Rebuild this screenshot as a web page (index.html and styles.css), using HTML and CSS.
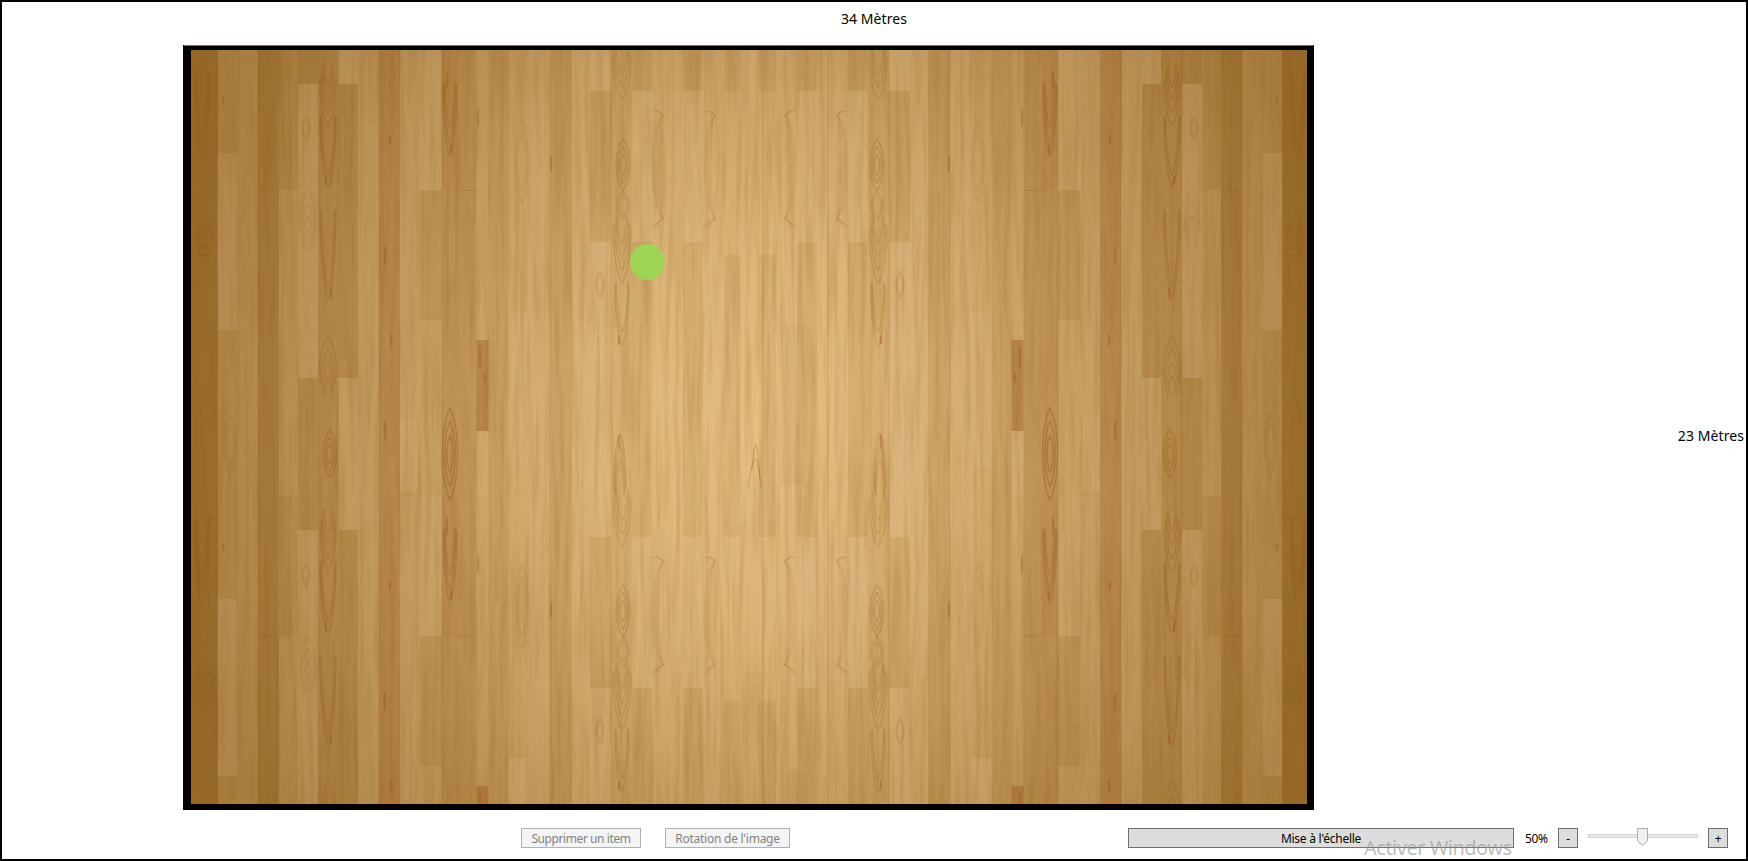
FILE: index.html
```html
<!DOCTYPE html>
<html lang="fr">
<head>
<meta charset="utf-8">
<title>Plan de salle</title>
<link rel="stylesheet" href="styles.css">
</head>
<body>
<div class="window">
  <header class="dimension dimension-width"><span class="measure">34 Mètres</span></header>
  <main class="workspace">
    <div class="room">
      <svg class="floor" viewBox="191 50 1116 754" preserveAspectRatio="none">
        <defs>
          <radialGradient id="light" gradientUnits="userSpaceOnUse" cx="0" cy="0" r="1" gradientTransform="translate(755 430) scale(585 690)">
            <stop offset="0" stop-color="#e5bf85"/>
            <stop offset=".28" stop-color="#dab478"/>
            <stop offset=".55" stop-color="#c69e60"/>
            <stop offset=".8" stop-color="#b48a4c"/>
            <stop offset="1" stop-color="#a47a39"/>
          </radialGradient>
          <filter id="grain" x="0" y="0" width="100%" height="100%" color-interpolation-filters="sRGB">
            <feTurbulence type="fractalNoise" baseFrequency=".2 .009" numOctaves="3" seed="8"/>
            <feColorMatrix values="0 0 0 0 .55  0 0 0 0 .33  0 0 0 0 .06  1.6 0 0 0 -.64"/>
          </filter>
          <g id="half"></g>
          <g id="boards">
            <use href="#half"/>
            <use href="#half" transform="translate(1500 0) scale(-1 1)"/>
            <g id="middle"></g>
          </g>
        </defs>
        <rect x="191" y="50" width="1116" height="754" fill="url(#light)"/>
        <use href="#boards"/>
        <use href="#boards" y="446"/>
        <rect x="191" y="50" width="1116" height="754" filter="url(#grain)" opacity=".26"/>
      </svg>
      <span class="item"></span>
    </div>
    <span class="measure dimension-height">23 Mètres</span>
  </main>
  <footer class="toolbar">
    <button class="button delete" disabled>Supprimer un item</button>
    <button class="button rotate" disabled>Rotation de l'image</button>
    <button class="button scale">Mise à l'échelle</button>
    <span class="zoom-value">50%</span>
    <button class="button step">-</button>
    <svg class="slider" width="110" height="20" viewBox="0 0 110 20">
      <rect x=".5" y="6.5" width="109" height="3" fill="#e7eaea" stroke="#d6d6d6"/>
      <path d="M49.500.5h10v12.500l-5 4.500-5-4.500z" fill="#f0f0f0" stroke="#acacac"/>
    </svg>
    <button class="button step">+</button>
  </footer>
  <div class="watermark">Activer Windows</div>
</div>
<script src="floor.js"></script>
</body>
</html>
```

FILE: styles.css
```css
* { box-sizing: border-box; }
body { margin: 0; background: #fff; font-family: "Noto Sans", "Open Sans", sans-serif; color: #000; }
.window { position: relative; display: flex; flex-direction: column; width: 1748px; height: 861px; border: 2px solid #000; overflow: hidden; }
.dimension { flex: 0 0 43px; display: flex; justify-content: center; padding-top: 7px; }
.measure { font-size: 14px; line-height: 20px; letter-spacing: .08px; white-space: nowrap; }
.workspace { display: flex; justify-content: space-between; height: 765px; padding-left: 181px; }
.room { position: relative; width: 1131px; height: 765px; border-style: solid; border-color: #000; border-width: 5px 7px 6px 8px; }
.room::before { content: ""; position: absolute; top: -5px; left: -7px; right: -6px; height: 1px; background: #8e7046; }
.floor { display: block; width: 1116px; height: 754px; }
.figure { filter: blur(.5px); }
.item { position: absolute; left: 439px; top: 194px; width: 35px; height: 36px; border-radius: 50%; background: #9fd356; }
.dimension-height { align-self: center; margin-right: 2px; margin-top: 17px; }
.toolbar { display: flex; align-items: flex-start; padding: 18px 18px 0 519px; height: 49px; }
.button { height: 20px; padding: 1px 0 0; border: 1px solid #707070; background: #ddd; font: 12px/17px "Noto Sans", "Open Sans", sans-serif; letter-spacing: -.25px; color: #000; white-space: nowrap; }
.button:disabled { background: #f4f4f4; border-color: #adb2b5; color: #838383; }
.delete { width: 120px; margin-right: 24px; letter-spacing: -.42px; }
.rotate { width: 125px; }
.scale { width: 386px; margin-left: 338px; }
.zoom-value { width: 44px; padding-left: 11px; font-size: 12px; line-height: 21px; letter-spacing: -.4px; }
.step { width: 20px; }
.slider { display: block; margin: 0 10px; }
.watermark { position: absolute; left: 1362px; top: 832px; font-size: 20px; line-height: 27px; letter-spacing: -.5px; white-space: nowrap; color: rgba(150, 150, 150, .65); }
```

FILE: floor.js
```js
const NS = "http://www.w3.org/2000/svg";
const DARK = "#7d4a08", RED = "#8f4810", PALE = "#d6b48c";
const half = document.getElementById("half");
const middle = document.getElementById("middle");

function add(parent, name, attrs) {
  const el = document.createElementNS(NS, name);
  for (const key in attrs) el.setAttribute(key, attrs[key]);
  parent.appendChild(el);
  return el;
}

// Boards: left, right, top, bottom, colour, opacity
const boards = [
  [191, 217.5, 50, 496, DARK, .34],
  [217.500, 237, 50, 153, PALE, .06], [217.500, 237, 153, 330, PALE, .24], [217.500, 237, 330, 496, PALE, .06],
  [237, 258, 50, 496, PALE, .1],
  [258, 279, 50, 496, DARK, .24], [279, 292, 50, 190, DARK, .06],
  [279, 298, 190, 496, PALE, .1],
  [298, 318.5, 50, 84, DARK, .1], [298, 318.5, 84, 378, PALE, .22], [298, 318.5, 378, 496, DARK, .1],
  [318.500, 339, 50, 496, DARK, .1],
  [339, 358, 50, 84, PALE, .22], [339, 358, 84, 378, DARK, .12], [339, 358, 378, 496, PALE, .22],
  [358, 379, 50, 496, PALE, .16],
  [379, 400, 50, 496, RED, .2],
  [400, 420, 50, 418, PALE, .14], [400, 417, 418, 491, PALE, .28],
  [420, 442, 50, 190, PALE, .2], [420, 442, 190, 320, DARK, .09], [420, 442, 320, 496, PALE, .06],
  [442, 458, 50, 190, RED, .2], [442, 458, 190, 330, DARK, .14], [442, 458, 330, 496, RED, .17],
  [458, 476.5, 50, 496, DARK, .15],
  [476.500, 488.5, 340, 431, RED, .34], [476.500, 488.5, 431, 496, PALE, .22],
  [488.500, 508.5, 50, 496, DARK, .09],
  [508.500, 529, 312, 468, PALE, .3],
  [529, 550, 50, 496, PALE, .14],
  [550, 572, 50, 496, DARK, .12],
  [572, 590, 50, 496, PALE, .12],
  [590, 611, 50, 91, PALE, .24], [590, 611, 91, 242, DARK, .09], [590, 611, 242, 496, PALE, .24],
  [611, 632.5, 50, 496, DARK, .06],
  [632.500, 652, 50, 91, DARK, .09], [632.500, 652, 91, 242, PALE, .26], [632.500, 652, 242, 496, DARK, .09],
  [652, 683, 91, 242, PALE, .14],
  [683, 702.5, 50, 91, DARK, .09], [683, 702.5, 91, 242, PALE, .2], [683, 702.5, 242, 496, DARK, .09],
  [702.500, 724, 50, 496, PALE, .1],
  [724, 741, 50, 91, DARK, .08], [724, 741, 255, 496, DARK, .08]
];
for (const [l, r, t, b, color, alpha] of boards) {
  add(half, "rect", { x: l, y: t, width: r - l, height: b - t, fill: color, "fill-opacity": alpha });
}

// Fine seams along the board edges
for (const x of [217.5, 258, 318.5, 379, 442, 550, 611]) {
  add(half, "path", { d: `M${x} 50V496`, stroke: DARK, "stroke-opacity": .16 });
}
for (const [l, r, y] of [[197, 217, 255.5], [197, 217, 337.5], [258, 279, 190.5], [458, 476, 190.5]]) {
  add(half, "path", { d: `M${l} ${y}H${r}`, stroke: DARK, "stroke-opacity": .2 });
}

const figure = add(half, "g", { class: "figure" });
function line(d, alpha, width) {
  add(figure, "path", { d, fill: "none", stroke: "#8b5010", "stroke-opacity": alpha, "stroke-width": width });
}
// Pointed growth rings: centre, tip, half width, height, direction
function arches(x, y, w, h, dir, count, alpha) {
  for (let i = 0; i < count; i++) {
    const s = 1 - i * .16, tip = y - dir * i * 13;
    line(`M${x - w * s} ${tip - dir * h * s}C${x - w * s} ${tip - dir * h * .4} ${x - 2} ${tip} ${x} ${tip}S${x + w * s} ${tip - dir * h * .4} ${x + w * s} ${tip - dir * h * s}`, alpha, 1.4);
  }
}
// Closed growth rings round a knot
function rings(x, y, w, h, count, alpha) {
  for (let i = 0; i < count; i++) {
    const s = 1 - i * .3, a = w * s, b = h * s;
    line(`M${x} ${y - b}C${x + a} ${y - b * .55} ${x + a} ${y + b * .5} ${x} ${y + b}C${x - a} ${y + b * .5} ${x - a} ${y - b * .55} ${x} ${y - b}Z`, alpha, 1.4);
  }
}
arches(328, 125, 8, 45, 1, 4, .24);
arches(328, 187, 8, 70, 1, 2, .3);
arches(328, 299, 8, 90, 1, 2, .26);
arches(328, 337, 9, 40, -1, 4, .22);
rings(330, 454, 9, 24, 3, .28);
arches(450, 155, 7, 70, 1, 3, .28);
rings(450, 454, 10, 46, 3, .36);
arches(622, 100, 9, 45, 1, 3, .16);
rings(623, 165, 9, 26, 3, .24);
rings(623, 206, 8, 14, 2, .16);
arches(622, 283, 9, 55, 1, 4, .2);
arches(622, 345, 7, 60, 1, 2, .22);
arches(620, 434, 6, 55, -1, 3, .22);
rings(522, 161, 8, 42, 2, .1);
arches(308, 190, 8, 40, -1, 4, .14);
rings(306, 129, 5, 12, 2, .15);
rings(600, 285, 5, 14, 2, .14);
arches(202, 160, 8, 90, 1, 3, .22);
arches(205, 262, 8, 30, 1, 3, .22);
rings(230, 445, 8, 30, 2, .15);
for (const x of [663, 715]) {
  for (let i = 0; i < 4; i++) {
    const d = i * 3;
    line(`M${x - 13 + d} 112Q${x - 7} ${108 + i} ${x} 115C${x - 15 + d} 130 ${x - 14 + d} 205 ${x} 219Q${x - 6} ${223 - i} ${x - 13 + d} 228`, .07, 1.6);
  }
}
// Elongated pores
for (const [x, y, h] of [[326, 174, 12], [331, 288, 12], [390, 135, 10], [385, 245, 20], [391, 333, 14], [451, 143, 12], [223, 97, 8], [385, 420, 22], [480, 345, 24], [485, 373, 10], [619, 335, 10], [619, 434, 15], [447, 70, 20], [478, 108, 20], [551, 155, 18]]) {
  add(figure, "ellipse", { cx: x, cy: y + h / 2, rx: 1.2, ry: h / 2, fill: "#934711", "fill-opacity": .3 });
}

// Centre boards, which are not mirrored
for (const [l, r, t, b, color, alpha] of [[743, 760, 109, 260, PALE, .1], [743, 760, 485, 496, PALE, .24], [743, 760, 50, 109, PALE, .24], [781, 804, 325, 485, DARK, .06]]) {
  add(middle, "rect", { x: l, y: t, width: r - l, height: b - t, fill: color, "fill-opacity": alpha });
}
for (const x of [763, 828]) {
  add(middle, "path", { d: `M${x} 50V496`, stroke: "#9a6218", "stroke-opacity": .2, "stroke-width": 1.5 });
}
add(middle, "path", { class: "figure", d: "M748 488Q756 430 761 488M752 470Q756 415 760 480", fill: "none", stroke: "#8b5010", "stroke-opacity": .3 });
```
